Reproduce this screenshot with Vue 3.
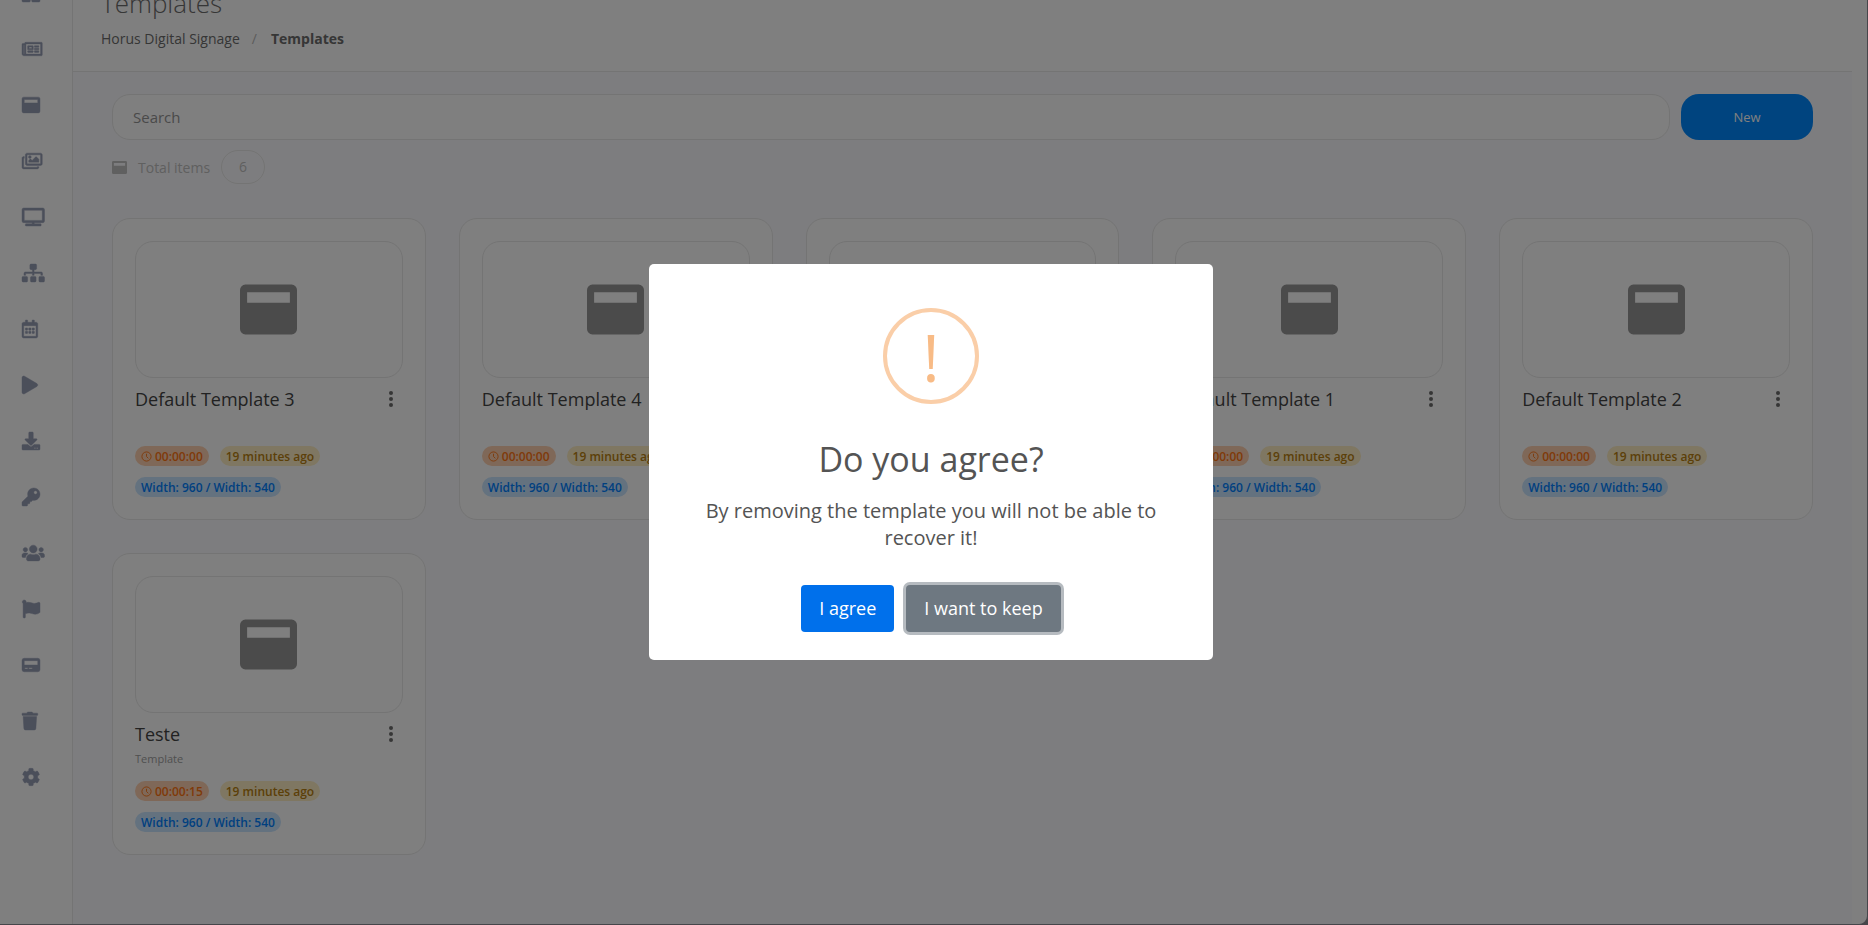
<script setup>
import { ref } from "vue";

const search = ref("");
const showModal = ref(true);

const windowIcon =
  "M48 32h416a48 48 0 0 1 48 48v352a48 48 0 0 1-48 48H48a48 48 0 0 1-48-48V80a48 48 0 0 1 48-48zm16 68v96h384v-96z";

const menu = [
  { name: "Dashboard", w: 512, d: "M0 0h236v236H0zM276 0h236v236H276zM0 276h236v206a30 30 0 0 1-30 30H30a30 30 0 0 1-30-30zM276 276h236v206a30 30 0 0 1-30 30H306a30 30 0 0 1-30-30z" },
  { name: "News", w: 576, d: "M552 64H112c-20.858 0-38.643 13.377-45.248 32H24c-13.255 0-24 10.745-24 24v272c0 30.928 25.072 56 56 56h496c13.255 0 24-10.745 24-24V88c0-13.255-10.745-24-24-24zM48 392V144h16v248c0 4.411-3.589 8-8 8s-8-3.589-8-8zm480 8H111.422c.374-2.614.578-5.283.578-8V112h416v288zM172 280h136c6.627 0 12-5.373 12-12v-96c0-6.627-5.373-12-12-12H172c-6.627 0-12 5.373-12 12v96c0 6.627 5.373 12 12 12zm28-80h80v40h-80v-40zm-40 140v-24c0-6.627 5.373-12 12-12h136c6.627 0 12 5.373 12 12v24c0 6.627-5.373 12-12 12H172c-6.627 0-12-5.373-12-12zm192 0v-24c0-6.627 5.373-12 12-12h104c6.627 0 12 5.373 12 12v24c0 6.627-5.373 12-12 12H364c-6.627 0-12-5.373-12-12zm0-144v-24c0-6.627 5.373-12 12-12h104c6.627 0 12 5.373 12 12v24c0 6.627-5.373 12-12 12H364c-6.627 0-12-5.373-12-12zm0 72v-24c0-6.627 5.373-12 12-12h104c6.627 0 12 5.373 12 12v24c0 6.627-5.373 12-12 12H364c-6.627 0-12-5.373-12-12z" },
  { name: "Templates", w: 512, d: windowIcon },
  { name: "Medias", w: 576, d: "M480 416v16c0 26.51-21.49 48-48 48H48c-26.51 0-48-21.49-48-48V176c0-26.51 21.49-48 48-48h16v48H54a6 6 0 0 0-6 6v244a6 6 0 0 0 6 6h372a6 6 0 0 0 6-6v-10h48zm42-336H150a6 6 0 0 0-6 6v244a6 6 0 0 0 6 6h372a6 6 0 0 0 6-6V86a6 6 0 0 0-6-6zm6-48c26.51 0 48 21.49 48 48v256c0 26.51-21.49 48-48 48H144c-26.51 0-48-21.49-48-48V80c0-26.51 21.49-48 48-48h384zM264 144c0 22.091-17.909 40-40 40s-40-17.909-40-40 17.909-40 40-40 40 17.909 40 40zm-72 96l39.515-39.515c4.686-4.686 12.284-4.686 16.971 0L288 240l103.515-103.515c4.686-4.686 12.284-4.686 16.971 0L480 208v80H192v-48z" },
  { name: "Screens", w: 640, d: "M592 0H48A48 48 0 0 0 0 48v320a48 48 0 0 0 48 48h240v32H112a16 16 0 0 0-16 16v32a16 16 0 0 0 16 16h416a16 16 0 0 0 16-16v-32a16 16 0 0 0-16-16H352v-32h240a48 48 0 0 0 48-48V48a48 48 0 0 0-48-48zm-16 352H64V64h512z" },
  { name: "Groups", w: 640, d: "M128 352H32c-17.67 0-32 14.33-32 32v96c0 17.67 14.33 32 32 32h96c17.67 0 32-14.33 32-32v-96c0-17.67-14.33-32-32-32zm-24-80h192v48h48v-48h192v48h48v-57.59c0-21.17-17.23-38.41-38.41-38.41H344v-64h40c17.67 0 32-14.33 32-32V32c0-17.67-14.33-32-32-32H256c-17.67 0-32 14.33-32 32v96c0 17.67 14.33 32 32 32h40v64H94.41C73.23 224 56 241.23 56 262.41V320h48v-48zm264 80h-96c-17.67 0-32 14.33-32 32v96c0 17.67 14.33 32 32 32h96c17.67 0 32-14.33 32-32v-96c0-17.67-14.33-32-32-32zm240 0h-96c-17.67 0-32 14.33-32 32v96c0 17.67 14.33 32 32 32h96c17.67 0 32-14.33 32-32v-96c0-17.67-14.33-32-32-32z" },
  { name: "Schedule", w: 448, d: "M148 288h-40c-6.6 0-12-5.4-12-12v-40c0-6.6 5.4-12 12-12h40c6.6 0 12 5.4 12 12v40c0 6.6-5.4 12-12 12zm108-12v-40c0-6.6-5.4-12-12-12h-40c-6.6 0-12 5.4-12 12v40c0 6.6 5.4 12 12 12h40c6.6 0 12-5.4 12-12zm96 0v-40c0-6.6-5.4-12-12-12h-40c-6.6 0-12 5.4-12 12v40c0 6.6 5.4 12 12 12h40c6.6 0 12-5.4 12-12zm-96 96v-40c0-6.6-5.4-12-12-12h-40c-6.6 0-12 5.4-12 12v40c0 6.6 5.4 12 12 12h40c6.6 0 12-5.4 12-12zm-96 0v-40c0-6.6-5.4-12-12-12h-40c-6.6 0-12 5.4-12 12v40c0 6.6 5.4 12 12 12h40c6.6 0 12-5.4 12-12zm192 0v-40c0-6.6-5.4-12-12-12h-40c-6.6 0-12 5.4-12 12v40c0 6.6 5.4 12 12 12h40c6.6 0 12-5.4 12-12zm96-260v352c0 26.5-21.5 48-48 48H48c-26.5 0-48-21.5-48-48V112c0-26.5 21.5-48 48-48h48V12c0-6.6 5.4-12 12-12h40c6.6 0 12 5.4 12 12v52h128V12c0-6.6 5.4-12 12-12h40c6.6 0 12 5.4 12 12v52h48c26.5 0 48 21.5 48 48zm-48 346V160H48v298c0 3.3 2.7 6 6 6h340c3.3 0 6-2.7 6-6z" },
  { name: "Player", w: 448, d: "M424.4 214.7L72.4 6.6C43.8-10.3 0 6.1 0 47.9V464c0 37.5 40.7 60.1 72.4 41.3l352-208c31.4-18.5 31.5-64.1 0-82.6z" },
  { name: "Downloads", w: 512, d: "M216 0h80c13.3 0 24 10.7 24 24v168h87.7c17.8 0 26.7 21.5 14.1 34.1L269.7 378.3c-7.5 7.5-19.8 7.5-27.3 0L90.1 226.1c-12.6-12.6-3.7-34.1 14.1-34.1H192V24c0-13.3 10.7-24 24-24zm296 376v112c0 13.3-10.7 24-24 24H24c-13.3 0-24-10.7-24-24V376c0-13.3 10.7-24 24-24h146.7l49 49c20.1 20.1 52.5 20.1 72.6 0l49-49H488c13.3 0 24 10.7 24 24zm-124 88c0-11-9-20-20-20s-20 9-20 20 9 20 20 20 20-9 20-20zm64 0c0-11-9-20-20-20s-20 9-20 20 9 20 20 20 20-9 20-20z" },
  { name: "Licenses", w: 512, d: "M512 176.001C512 273.203 433.202 352 336 352c-11.22 0-22.19-1.062-32.827-3.069l-24.012 27.014A23.999 23.999 0 0 1 261.223 384H224v40c0 13.255-10.745 24-24 24h-40v40c0 13.255-10.745 24-24 24H24c-13.255 0-24-10.745-24-24v-78.059c0-6.365 2.529-12.47 7.029-16.971l161.802-161.802C163.108 213.814 160 195.271 160 176 160 78.798 238.797.001 335.999 0 433.488-.001 512 78.511 512 176.001zM336 128c0 26.51 21.49 48 48 48s48-21.49 48-48-21.49-48-48-48-48 21.49-48 48z" },
  { name: "Users", w: 640, d: "M96 224c35.3 0 64-28.7 64-64s-28.7-64-64-64-64 28.7-64 64 28.7 64 64 64zm448 0c35.3 0 64-28.7 64-64s-28.7-64-64-64-64 28.7-64 64 28.7 64 64 64zm32 32h-64c-17.6 0-33.5 7.1-45.1 18.6 40.3 22.1 68.9 62 75.1 109.4h66c17.7 0 32-14.3 32-32v-32c0-35.3-28.7-64-64-64zm-256 0c61.9 0 112-50.1 112-112S381.9 32 320 32 208 82.1 208 144s50.1 112 112 112zm76.8 32h-8.3c-20.8 10-43.9 16-68.5 16s-47.6-6-68.5-16h-8.3C179.6 288 128 339.6 128 403.2V432c0 26.5 21.5 48 48 48h288c26.5 0 48-21.5 48-48v-28.8c0-63.6-51.6-115.2-115.2-115.2zm-223.7-13.4C161.5 263.1 145.6 256 128 256H64c-35.3 0-64 28.7-64 64v32c0 17.7 14.3 32 32 32h65.9c6.3-47.4 34.9-87.3 75.2-109.4z" },
  { name: "Reports", w: 512, d: "M349.565 98.783C295.978 98.783 251.721 64 184.348 64c-24.955 0-47.309 4.384-68.045 12.013a55.947 55.947 0 0 0 3.586-23.562C118.117 24.015 94.806 1.206 66.338.048 34.345-1.254 8 24.296 8 56c0 19.026 9.497 35.825 24 45.945V488c0 13.255 10.745 24 24 24h16c13.255 0 24-10.745 24-24v-94.4c28.311-12.064 63.582-22.122 114.435-22.122 53.588 0 97.844 34.783 165.217 34.783 48.169 0 86.667-16.294 122.505-40.858C506.84 359.452 512 349.571 512 339.045v-243.1c0-23.393-24.269-38.87-45.485-29.016-34.338 15.948-76.454 31.854-116.95 31.854z" },
  { name: "Billing", w: 512, d: "M64 64h384a64 64 0 0 1 64 64v256a64 64 0 0 1-64 64H64a64 64 0 0 1-64-64V128a64 64 0 0 1 64-64zm0 68v124h384V132zm16 200v36h84v-36zm112 0v36h100v-36z" },
  { name: "Trash", w: 448, d: "M432 32H312l-9.4-18.7A24 24 0 0 0 281.1 0H166.8a23.72 23.72 0 0 0-21.4 13.3L136 32H16A16 16 0 0 0 0 48v32a16 16 0 0 0 16 16h416a16 16 0 0 0 16-16V48a16 16 0 0 0-16-16zM53.2 467a48 48 0 0 0 47.9 45h245.8a48 48 0 0 0 47.9-45L416 128H32z" },
  { name: "Settings", w: 512, d: "M487.4 315.7l-42.6-24.6c4.3-23.2 4.3-47 0-70.2l42.6-24.6c4.9-2.8 7.1-8.6 5.5-14-11.1-35.6-30-67.8-54.7-94.6-3.8-4.1-10-5.1-14.8-2.3L380.8 110c-17.9-15.4-38.5-27.3-60.8-35.1V25.8c0-5.6-3.9-10.5-9.4-11.7-36.7-8.2-74.3-7.8-109.2 0-5.5 1.2-9.4 6.1-9.4 11.7V75c-22.2 7.9-42.8 19.8-60.8 35.1L88.7 85.5c-4.9-2.8-11-1.9-14.8 2.3-24.7 26.7-43.6 58.9-54.7 94.6-1.7 5.4.6 11.2 5.5 14L67.3 221c-4.3 23.2-4.3 47 0 70.2l-42.6 24.6c-4.9 2.8-7.1 8.6-5.5 14 11.1 35.6 30 67.8 54.7 94.6 3.8 4.1 10 5.1 14.8 2.3l42.6-24.6c17.9 15.4 38.5 27.3 60.8 35.1v49.2c0 5.6 3.9 10.5 9.4 11.7 36.7 8.2 74.3 7.8 109.2 0 5.5-1.2 9.4-6.1 9.4-11.7v-49.2c22.2-7.9 42.8-19.8 60.8-35.1l42.6 24.6c4.9 2.8 11 1.9 14.8-2.3 24.7-26.7 43.6-58.9 54.7-94.6 1.5-5.5-.7-11.3-5.6-14.1zM256 336c-44.1 0-80-35.9-80-80s35.9-80 80-80 80 35.9 80 80-35.9 80-80 80z" },
];

const templates = ref([
  { name: "Default Template 3", description: "", time: "00:00:00" },
  { name: "Default Template 4", description: "", time: "00:00:00" },
  { name: "Default Template 5", description: "", time: "00:00:00" },
  { name: "Default Template 1", description: "", time: "00:00:00" },
  { name: "Default Template 2", description: "", time: "00:00:00" },
  { name: "Teste", description: "Template", time: "00:00:15" },
]);

const closeModal = () => {
  showModal.value = false;
};
</script>

<template>
  <div class="page">
    <nav class="sidebar">
      <a v-for="item in menu" :key="item.name" href="#" :aria-label="item.name">
        <svg :viewBox="`0 0 ${item.w} 512`"><path fill-rule="evenodd" :d="item.d" /></svg>
      </a>
    </nav>

    <div class="main">
      <header class="header">
        <h1>Templates</h1>
        <div class="breadcrumb">
          <a href="#">Horus Digital Signage</a>
          <span class="separator">/</span>
          <strong>Templates</strong>
        </div>
      </header>

      <main class="content">
        <div class="toolbar">
          <input v-model="search" type="text" placeholder="Search" aria-label="Search" />
          <button type="button" class="btn-new">New</button>
        </div>

        <div class="total">
          <svg viewBox="0 0 512 512"><path fill-rule="evenodd" :d="windowIcon" /></svg>
          <span>Total items</span>
          <span class="count">{{ templates.length }}</span>
        </div>

        <div class="grid">
          <article v-for="item in templates" :key="item.name" class="card">
            <div class="thumb">
              <svg viewBox="0 0 512 512"><path fill-rule="evenodd" :d="windowIcon" /></svg>
            </div>
            <div class="card-title">
              <h2>{{ item.name }}</h2>
              <button type="button" class="more" aria-label="Options">
                <svg viewBox="0 0 4 16">
                  <circle cx="2" cy="2" r="2" />
                  <circle cx="2" cy="8" r="2" />
                  <circle cx="2" cy="14" r="2" />
                </svg>
              </button>
            </div>
            <p class="description">{{ item.description }}</p>
            <div class="badges">
              <span class="badge orange">
                <svg viewBox="0 0 12 12">
                  <circle cx="6" cy="6" r="5" />
                  <path d="M6 3v3l2 2" />
                </svg>
                {{ item.time }}
              </span>
              <span class="badge yellow">19 minutes ago</span>
              <span class="badge blue">Width: 960 / Width: 540</span>
            </div>
          </article>
        </div>
      </main>
    </div>
  </div>

  <div v-if="showModal" class="overlay">
    <div class="modal" role="dialog" aria-modal="true" aria-labelledby="modal-title">
      <div class="warning">!</div>
      <h2 id="modal-title">Do you agree?</h2>
      <p>By removing the template you will not be able to recover it!</p>
      <div class="actions">
        <button type="button" class="confirm" @click="closeModal">I agree</button>
        <button type="button" class="cancel" @click="closeModal">I want to keep</button>
      </div>
    </div>
  </div>
</template>

<style>
body {
  background-color: #8c8c94;
  font-family: "Open Sans", sans-serif;
}
</style>

<style scoped>
* {
  box-sizing: border-box;
}

button,
input {
  font-family: inherit;
}

a {
  color: inherit;
  text-decoration: none;
}

.page {
  display: flex;
  height: 100vh;
  overflow: hidden;
  background-color: #fff;
  border-right: 1px solid #8c8c94;
  border-bottom: 1px solid #8c8c94;
  border-bottom-right-radius: 9px;
  padding-right: 15px;
}

.sidebar {
  flex: none;
  width: 73px;
  margin-top: -35px;
  border-right: 1px solid #e8e8e8;
}

.sidebar a {
  display: flex;
  align-items: center;
  height: 56px;
  padding-left: 22px;
}

.sidebar svg {
  height: 18px;
  overflow: visible;
  fill: #969eb4;
  stroke: #969eb4;
  stroke-width: 12;
}

.main {
  flex: 1;
  display: flex;
  flex-direction: column;
}

.header {
  height: 72px;
  flex: none;
  display: flex;
  flex-direction: column;
  justify-content: flex-end;
  padding: 0 28px 22px;
  border-bottom: 1px solid #e8e8e8;
}

h1 {
  margin: 0 0 8px;
  font-size: 26px;
  line-height: 36px;
  font-weight: 300;
  color: #6c6c6c;
}

.breadcrumb {
  display: flex;
  font-size: 14px;
  line-height: 20px;
  color: #6c6c6c;
}

.separator {
  margin: 0 14px 0 12px;
  color: #b8b8b8;
}

.content {
  flex: 1;
  padding: 22px 39px;
  background-color: #fbfbfe;
}

.toolbar {
  display: flex;
  gap: 11px;
}

.toolbar input {
  flex: 1;
  height: 46px;
  padding: 0 20px;
  font-size: 15px;
  background-color: #fff;
  border: 1px solid #e8e8e8;
  border-radius: 18px;
  outline: none;
}

.toolbar input::placeholder {
  color: #949494;
  opacity: 1;
}

.btn-new {
  width: 132px;
  font-size: 13px;
  color: #fff;
  background-color: #0088ff;
  border: none;
  border-radius: 18px;
  cursor: pointer;
}

.total {
  display: flex;
  align-items: center;
  gap: 11px;
  margin: 10px 0 34px;
  font-size: 14px;
  color: #c0c0c0;
}

.total svg {
  width: 15px;
  fill: #c0c0c0;
}

.count {
  width: 44px;
  height: 34px;
  line-height: 32px;
  text-align: center;
  border: 1px solid #e8e8e8;
  border-radius: 17px;
}

.grid {
  display: grid;
  grid-template-columns: repeat(5, 1fr);
  gap: 33px;
}

.card {
  padding: 22px;
  background-color: #fff;
  border: 1px solid #e8e8e8;
  border-radius: 18px;
}

.thumb {
  display: flex;
  align-items: center;
  justify-content: center;
  height: 137px;
  border: 1px solid #e8e8e8;
  border-radius: 18px;
}

.thumb svg {
  width: 57px;
  fill: #969696;
}

.card-title {
  display: flex;
  justify-content: space-between;
  align-items: center;
  margin-top: 8px;
}

.card-title h2 {
  margin: 0;
  font-size: 18px;
  line-height: 26px;
  font-weight: 500;
  color: #444;
}

.more {
  display: flex;
  padding: 0 10px;
  background: none;
  border: none;
  cursor: pointer;
}

.more svg {
  width: 4px;
  fill: #6c6c6c;
}

.description {
  margin: 4px 0 14px;
  height: 16px;
  font-size: 11px;
  line-height: 16px;
  color: #a0a0a0;
}

.badges {
  display: flex;
  flex-wrap: wrap;
  gap: 11px;
}

.badge {
  display: flex;
  align-items: center;
  gap: 3px;
  height: 20px;
  padding: 0 6px;
  font-size: 12px;
  font-weight: 600;
  border-radius: 10px;
}

.badge svg {
  width: 11px;
  fill: none;
  stroke: currentColor;
}

.orange {
  color: #ff7410;
  background-color: #ffd0b0;
}

.yellow {
  color: #b88010;
  background-color: #ffeec4;
}

.blue {
  color: #0080ff;
  background-color: #c8e4ff;
}

.overlay {
  position: fixed;
  inset: 0;
  display: flex;
  align-items: center;
  justify-content: center;
  padding: 0 6px 2px 0;
  background-color: rgba(0, 0, 0, 0.5);
}

.modal {
  width: 564px;
  max-width: 100%;
  padding: 44px 40px 28px;
  text-align: center;
  color: #545454;
  background-color: #fff;
  border-radius: 5px;
}

.warning {
  width: 96px;
  height: 96px;
  margin: 0 auto;
  font-size: 66px;
  line-height: 88px;
  color: #f8bb86;
  border: 4px solid #facea8;
  border-radius: 50%;
}

.modal h2 {
  margin: 31px 0 14px;
  font-size: 34px;
  line-height: 48px;
  font-weight: 500;
}

.modal p {
  margin: 0;
  font-size: 20px;
  line-height: 27px;
}

.actions {
  display: flex;
  justify-content: center;
  gap: 12px;
  margin-top: 34px;
}

.actions button {
  height: 47px;
  padding: 0 18px;
  font-size: 18px;
  color: #fff;
  border: none;
  border-radius: 4px;
  cursor: pointer;
}

.actions .confirm {
  background-color: #0070eb;
}

.actions .cancel {
  background-color: #6e7881;
  box-shadow: 0 0 0 3px #b6bbc0;
}
</style>
